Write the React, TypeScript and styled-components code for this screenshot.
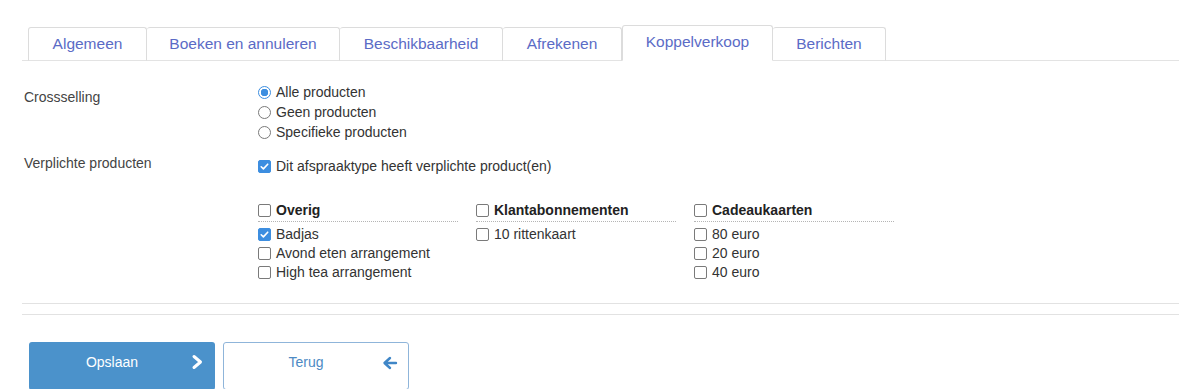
import React from 'react'
import styled, { createGlobalStyle } from 'styled-components'

const GlobalStyle = createGlobalStyle`
  html, body {
    margin: 0;
    padding: 0;
    background: #ffffff;
    font-family: 'Liberation Sans', Arial, sans-serif;
    color: #333333;
  }
`

const tabs = ['Algemeen', 'Boeken en annuleren', 'Beschikbaarheid', 'Afrekenen', 'Koppelverkoop', 'Berichten']
const tabWidths = [119, 193, 163, 119, 151, 113]

const groups = [
  { title: 'Overig', items: [{ label: 'Badjas', checked: true }, { label: 'Avond eten arrangement' }, { label: 'High tea arrangement' }] },
  { title: 'Klantabonnementen', items: [{ label: '10 rittenkaart' }] },
  { title: 'Cadeaukaarten', items: [{ label: '80 euro' }, { label: '20 euro' }, { label: '40 euro' }] },
]

const App: React.FC = () => {
  const [cross, setCross] = React.useState('alle')
  const [required, setRequired] = React.useState(true)
  const [checked, setChecked] = React.useState<Record<string, boolean>>({ Badjas: true })

  const toggle = (key: string) => setChecked({ ...checked, [key]: !checked[key] })

  return (
    <Page>
      <GlobalStyle />
      <TabBar>
        {tabs.map((t, i) => (
          <Tab key={t} $active={t === 'Koppelverkoop'} $width={tabWidths[i]}>
            {t}
          </Tab>
        ))}
      </TabBar>

      <FormRow $top={21}>
        <Label $offset={5}>Crossselling</Label>
        <Controls>
          <Option>
            <Radio type="radio" name="cross" checked={cross === 'alle'} onChange={() => setCross('alle')} />
            Alle producten
          </Option>
          <Option>
            <Radio type="radio" name="cross" checked={cross === 'geen'} onChange={() => setCross('geen')} />
            Geen producten
          </Option>
          <Option>
            <Radio type="radio" name="cross" checked={cross === 'spec'} onChange={() => setCross('spec')} />
            Specifieke producten
          </Option>
        </Controls>
      </FormRow>

      <FormRow $top={14}>
        <Label $offset={-3}>Verplichte producten</Label>
        <Controls>
          <Option>
            <Check type="checkbox" checked={required} onChange={() => setRequired(!required)} />
            Dit afspraaktype heeft verplichte product(en)
          </Option>
        </Controls>
      </FormRow>

      <Groups>
        {groups.map((g) => (
          <Group key={g.title}>
            <GroupHeader>
              <Check type="checkbox" checked={!!checked[g.title]} onChange={() => toggle(g.title)} />
              {g.title}
            </GroupHeader>
            {g.items.map((it) => (
              <Item key={it.label}>
                <Check type="checkbox" checked={!!checked[it.label]} onChange={() => toggle(it.label)} />
                {it.label}
              </Item>
            ))}
          </Group>
        ))}
      </Groups>

      <Divider $top={21} />
      <Divider $top={10} />

      <Buttons>
        <PrimaryButton>
          Opslaan
          <ButtonIcon>
            <svg width="14" height="16" viewBox="0 0 14 16">
              <path d="M3 2.5 L9.5 8 L3 13.5" fill="none" stroke="#ffffff" strokeWidth="3" strokeLinecap="round" strokeLinejoin="round" />
            </svg>
          </ButtonIcon>
        </PrimaryButton>
        <SecondaryButton>
          Terug
          <ButtonIcon>
            <svg width="16" height="16" viewBox="0 0 16 16">
              <path d="M14 8 H3 M8 3 L2.5 8 L8 13" fill="none" stroke="#3f86c7" strokeWidth="2.4" strokeLinecap="round" strokeLinejoin="round" />
            </svg>
          </ButtonIcon>
        </SecondaryButton>
      </Buttons>
    </Page>
  )
}

const Page = styled.div`
  width: 1200px;
  height: 389px;
  overflow: hidden;
  padding-top: 25px;
  box-sizing: border-box;
`

const TabBar = styled.div`
  display: flex;
  align-items: flex-end;
  margin-left: 22px;
  width: 1157px;
  padding-left: 6px;
  box-sizing: border-box;
  border-bottom: 1px solid #e3e3e3;
  height: 36px;
`

const Tab = styled.div<{ $active?: boolean; $width: number }>`
  width: ${(p) => p.$width}px;
  box-sizing: border-box;
  height: ${(p) => (p.$active ? 36 : 34)}px;
  margin-bottom: -1px;
  display: flex;
  align-items: center;
  justify-content: center;
  padding-bottom: ${(p) => (p.$active ? 3 : 0)}px;
  border: 1px solid #dcdcdc;
  border-left-width: ${(p) => (p.$active ? 1 : 0)}px;
  border-bottom: 1px solid ${(p) => (p.$active ? '#ffffff' : '#e3e3e3')};
  border-radius: 3px 3px 0 0;
  background: #ffffff;
  color: #5b6bc6;
  font-size: 15.5px;
  &:first-child {
    border-left-width: 1px;
  }
`

const FormRow = styled.div<{ $top: number }>`
  display: flex;
  margin-top: ${(p) => p.$top}px;
  padding-left: 24px;
`

const Label = styled.div<{ $offset?: number }>`
  width: 234px;
  font-size: 14px;
  line-height: 20px;
  margin-top: ${(p) => p.$offset || 0}px;
  color: #444444;
`

const Controls = styled.div`
  display: flex;
  flex-direction: column;
`

const Option = styled.label`
  display: flex;
  align-items: center;
  font-size: 14px;
  line-height: 20px;
  color: #333333;
`

const Radio = styled.input`
  appearance: none;
  width: 13px;
  height: 13px;
  margin: 0 5px 0 0;
  border: 1px solid #7a7a7a;
  border-radius: 50%;
  box-sizing: border-box;
  background: #ffffff;
  &:checked {
    border-color: #3d8ee0;
    background: radial-gradient(circle, #3d8ee0 0 3.5px, #ffffff 4px);
  }
`

const Check = styled.input`
  appearance: none;
  width: 13px;
  height: 13px;
  margin: 0 5px 0 0;
  border: 1px solid #7a7a7a;
  border-radius: 2px;
  box-sizing: border-box;
  background: #ffffff;
  flex-shrink: 0;
  &:checked {
    border-color: #3d8ee0;
    background-color: #3d8ee0;
    background-image: url("data:image/svg+xml;utf8,<svg xmlns='http://www.w3.org/2000/svg' viewBox='0 0 13 13'><path d='M2.6 6.8 L5.2 9.3 L10.3 3.8' fill='none' stroke='white' stroke-width='1.9' stroke-linecap='round' stroke-linejoin='round'/></svg>");
    background-size: 100% 100%;
  }
`

const Groups = styled.div`
  display: flex;
  gap: 18px;
  margin-top: 25px;
  padding-left: 258px;
`

const Group = styled.div`
  width: 200px;
  display: flex;
  flex-direction: column;
`

const GroupHeader = styled.label`
  display: flex;
  align-items: center;
  font-size: 14px;
  font-weight: bold;
  line-height: 19px;
  padding-bottom: 1px;
  border-bottom: 1px dotted #b5b5b5;
  margin-bottom: 3px;
  color: #222222;
`

const Item = styled.label`
  display: flex;
  align-items: center;
  font-size: 14px;
  line-height: 19px;
  color: #333333;
`

const Divider = styled.div<{ $top: number }>`
  margin-top: ${(p) => p.$top}px;
  margin-left: 22px;
  width: 1157px;
  border-top: 1px solid #e2e2e2;
`

const Buttons = styled.div`
  display: flex;
  gap: 8px;
  margin-top: 27px;
  padding-left: 29px;
`

const BaseButton = styled.div`
  position: relative;
  width: 186px;
  height: 48px;
  padding-bottom: 8px;
  box-sizing: border-box;
  border-radius: 3px;
  display: flex;
  align-items: center;
  justify-content: center;
  font-size: 14px;
`

const PrimaryButton = styled(BaseButton)`
  background: #4b92cb;
  color: #ffffff;
  padding-right: 20px;
`

const SecondaryButton = styled(BaseButton)`
  background: #ffffff;
  border: 1px solid #8fb5da;
  color: #4d8ac4;
  padding-right: 20px;
`

const ButtonIcon = styled.span`
  position: absolute;
  right: 10px;
  top: 12px;
  display: flex;
`

export default App
